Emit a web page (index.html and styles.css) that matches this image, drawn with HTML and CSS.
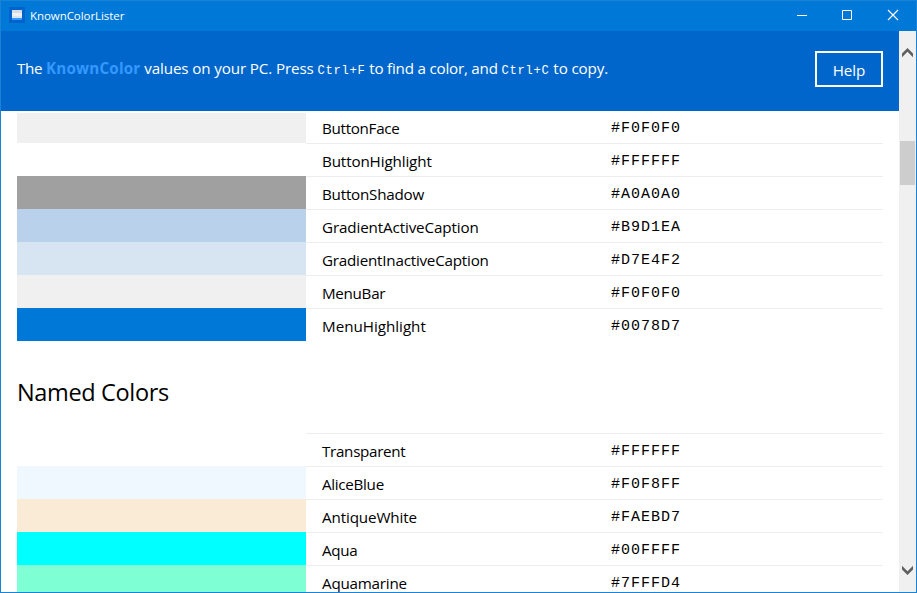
FILE: index.html
```
<!DOCTYPE html>
<html lang="en">
<head>
<meta charset="utf-8">
<title>KnownColorLister</title>
<link rel="stylesheet" href="styles.css">
</head>
<body>
<div class="window">
  <div class="titlebar">
    <svg class="app-icon" width="16" height="16" viewBox="0 0 16 16" shape-rendering="crispEdges"><path fill="#0063cc" d="M0 0h16v16H0z"/><path fill="#d5dde7" d="M3 3h10v3H3z"/><path fill="#f0f0f0" d="M3 6h10v3H3z"/><path fill="#d8e5f4" d="M3 9h10v2H3z"/><path fill="#3399ff" d="M3 11h10v2H3z"/></svg>
    <span class="app-name">KnownColorLister</span>
    <div class="controls">
      <svg width="46" height="30" viewBox="0 0 46 30" fill="none" stroke="#fff"><path d="M19 14.5h10"/></svg>
      <svg width="46" height="30" viewBox="0 0 46 30" fill="none" stroke="#fff"><path d="M18.5 9.5h9v9h-9z"/></svg>
      <svg width="46" height="30" viewBox="0 0 46 30" fill="none" stroke="#fff" stroke-width="1.15"><path d="M18 9l10 10M28 9L18 19"/></svg>
    </div>
  </div>
  <div class="body">
    <div class="page">
      <header class="banner">
        <p class="intro">The <b>KnownColor</b><span class="loose"> values on your PC. Press </span><code>Ctrl+F</code><span class="mid"> to find a color, and </span><code>Ctrl+C</code><span class="loose"> to copy.</span></p>
        <button class="help">Help</button>
      </header>
      <main class="list">
        <div class="group system">
          <div class="row"><i class="swatch face"></i><span class="name">ButtonFace</span><code class="hex">#F0F0F0</code></div>
          <div class="row"><i class="swatch"></i><span class="name loose">ButtonHighlight</span><code class="hex">#FFFFFF</code></div>
          <div class="row"><i class="swatch shadow"></i><span class="name mid">ButtonShadow</span><code class="hex">#A0A0A0</code></div>
          <div class="row"><i class="swatch active"></i><span class="name loose">GradientActiveCaption</span><code class="hex">#B9D1EA</code></div>
          <div class="row"><i class="swatch inactive"></i><span class="name mid">GradientInactiveCaption</span><code class="hex">#D7E4F2</code></div>
          <div class="row"><i class="swatch face"></i><span class="name">MenuBar</span><code class="hex">#F0F0F0</code></div>
          <div class="row"><i class="swatch highlight"></i><span class="name looser">MenuHighlight</span><code class="hex">#0078D7</code></div>
        </div>
        <h2 class="heading">Named Colors</h2>
        <div class="group">
          <div class="row"><i class="swatch"></i><span class="name">Transparent</span><code class="hex">#FFFFFF</code></div>
          <div class="row"><i class="swatch alice"></i><span class="name">AliceBlue</span><code class="hex">#F0F8FF</code></div>
          <div class="row"><i class="swatch antique"></i><span class="name loose">AntiqueWhite</span><code class="hex">#FAEBD7</code></div>
          <div class="row"><i class="swatch aqua"></i><span class="name">Aqua</span><code class="hex">#00FFFF</code></div>
          <div class="row"><i class="swatch marine"></i><span class="name mid">Aquamarine</span><code class="hex">#7FFFD4</code></div>
        </div>
      </main>
    </div>
    <div class="scrollbar">
      <svg width="17" height="17" viewBox="0 0 17 17"><path fill="#606060" d="M3 9.6L8.5 4 14 9.6v3.6L8.5 7.8 3 13.2z"/></svg>
      <div class="thumb"></div>
      <svg class="down" width="17" height="17" viewBox="0 0 17 17"><path fill="#606060" d="M3 7.4L8.5 13 14 7.4V3.8L8.5 9.2 3 3.8z"/></svg>
    </div>
  </div>
</div>
</body>
</html>
```
FILE: styles.css
```
* { box-sizing: border-box; }
body { margin: 0; overflow: hidden; background: #fff; }
.window {
  width: 917px; height: 593px;
  display: flex; flex-direction: column;
  border: 1px solid #1883d7;
  background: #fff; color: #000;
  font: 15.2px/20px "Open Sans", "Noto Sans", sans-serif;
}
.titlebar {
  height: 30px; flex: none;
  display: flex; align-items: flex-start;
  background: #0078d7; color: #fff;
  padding-left: 8px;
}
.app-icon { margin-top: 6px; }
.app-name { margin: 5px 0 0 5px; font-size: 11.5px; letter-spacing: -0.06px; }
.controls { margin-left: auto; display: flex; }
.body { flex: 1; min-height: 0; display: flex; }
.page { width: 898px; display: flex; flex-direction: column; overflow: hidden; }
.banner {
  height: 80px; flex: none;
  display: flex; justify-content: space-between; align-items: flex-start;
  padding: 20px 16px 0;
  background: #0066cc; color: #fff;
}
.intro { margin: 7px 0 0; white-space: pre; letter-spacing: -0.3px; }
.intro b { color: #3399ff; letter-spacing: 0.2px; }
.intro code { font: 12.2px "Liberation Mono", monospace; letter-spacing: 0.7px; }
.help {
  width: 68px; height: 36px; padding: 1px 0 0;
  border: 2px solid #fff; background: transparent; color: #fff;
  font: inherit; letter-spacing: -0.1px;
}
.list { flex: 1; min-height: 0; padding: 0 16px; overflow: hidden; }
.row { height: 33px; display: grid; grid-template-columns: 289px 289px 288px; }
.name, .hex { border-top: 1px solid #ededed; }
.name { padding: 7px 0 0 16px; letter-spacing: -0.3px; }
.mid { letter-spacing: -0.22px; }
.loose { letter-spacing: -0.13px; }
.looser { letter-spacing: -0.02px; }
.hex { padding: 7px 0 0 16px; font: 15px/21px "Liberation Mono", monospace; letter-spacing: 1px; }
.system .row:first-child { height: 32px; padding-top: 2px; }
.system .row:first-child > span { border: 0; padding-top: 5px; }
.system .row:first-child > code { border: 0; padding-top: 5px; }
.face { background: #f0f0f0; }
.shadow { background: #a0a0a0; }
.active { background: #b9d1ea; }
.inactive { background: #d7e4f2; }
.highlight { background: #0078d7; }
.alice { background: #f0f8ff; }
.antique { background: #faebd7; }
.aqua { background: #00ffff; }
.marine { background: #7fffd4; }
.heading { margin: 35px 0 25px; font-size: 23.5px; line-height: 32px; font-weight: 400; letter-spacing: -0.35px; }
.scrollbar { width: 17px; background: #f0f0f0; display: flex; flex-direction: column; align-items: center; padding-top: 13px; }
.thumb { width: 15px; height: 44px; margin-top: 80px; background: #cdcdcd; }
.down { margin: auto 0 13px; }
```
